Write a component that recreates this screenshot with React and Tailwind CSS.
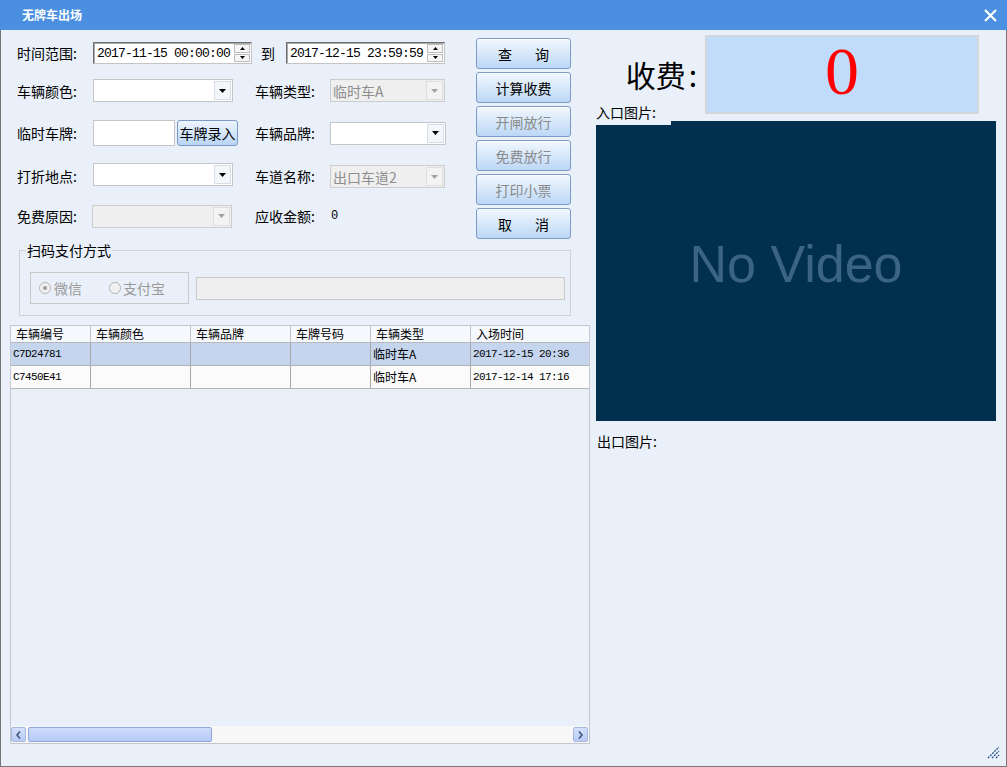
import React from 'react'

const mono = "font-['Liberation_Mono','Noto_Sans_CJK_SC',monospace]"

function DownArrow({ gray }) {
  return (
    <svg width="7" height="4" viewBox="0 0 7 4">
      <polygon points="0,0 7,0 3.5,4" fill={gray ? '#a3a3a3' : '#000'} />
    </svg>
  )
}

function Combo({ w, value, disabled, extra = '' }) {
  return (
    <div className={`${w} h-[23px] flex items-stretch border ${disabled ? 'border-[#cdcdcd] bg-[#efefef]' : 'border-[#c6c6c6] bg-white'} ${extra}`}>
      <div className={`flex-1 flex items-center pl-[2px] text-[14px] leading-none ${disabled ? 'text-[#8d8d8d]' : 'text-black'}`}>{value}</div>
      <div className={`w-[17px] m-[1px] flex items-center justify-center border ${disabled ? 'border-[#dedede] bg-[#f3f3f3]' : 'border-[#d6dde6] bg-[#f4f7fa]'}`}>
        <DownArrow gray={disabled} />
      </div>
    </div>
  )
}

function DateBox({ value }) {
  return (
    <div className="w-[159px] h-[22px] flex items-stretch border border-[#c4c4c4] border-t-[#6f6f6f] border-l-[#6f6f6f] bg-white shadow-[inset_1px_1px_0_#a9a9a9]">
      <div className={`flex-1 flex items-center pl-[3px] text-[13px] tracking-[-0.8px] leading-none ${mono}`}>{value}</div>
      <div className="w-[17px] flex flex-col gap-[1px] py-[1px] pr-[1px]">
        <div className="flex-1 flex items-center justify-center border border-[#bdbdbd] bg-[#f6f6f6]">
          <svg width="5" height="3" viewBox="0 0 5 3"><polygon points="0,3 5,3 2.5,0" fill="#000" /></svg>
        </div>
        <div className="flex-1 flex items-center justify-center border border-[#bdbdbd] bg-[#f6f6f6]">
          <svg width="5" height="3" viewBox="0 0 5 3"><polygon points="0,0 5,0 2.5,3" fill="#000" /></svg>
        </div>
      </div>
    </div>
  )
}

function Btn({ children, disabled }) {
  return (
    <div className={`h-[31px] rounded-[3px] border border-[#7b9bc6] bg-linear-to-b from-[#f2f7fd] via-[#d7e8fa] to-[#bcd7f6] shadow-[inset_0_1px_0_#ffffff] flex items-center justify-center text-[14px] leading-none ${disabled ? 'text-[#8a8a8a]' : 'text-black'}`}>
      {children}
    </div>
  )
}

function Label({ children, w = 'w-[76px]' }) {
  return <div className={`${w} text-[14px] leading-none`}>{children}</div>
}

function ScrollArrow({ left }) {
  return (
    <div className="w-[15px] h-[15px] rounded-[2px] border border-[#a6b9e1] bg-linear-to-b from-[#d3dffb] to-[#b9cbf6] flex items-center justify-center">
      <svg width="5" height="8" viewBox="0 0 5 8">
        <polyline points={left ? '4,0.5 1,4 4,7.5' : '1,0.5 4,4 1,7.5'} fill="none" stroke="#3b5283" strokeWidth="1.6" />
      </svg>
    </div>
  )
}

const cols = [
  { name: '车辆编号', w: 'w-[80px]' },
  { name: '车辆颜色', w: 'w-[100px]' },
  { name: '车辆品牌', w: 'w-[100px]' },
  { name: '车牌号码', w: 'w-[80px]' },
  { name: '车辆类型', w: 'w-[100px]' },
  { name: '入场时间', w: 'flex-1' },
]

const rows = [
  ['C7D24781', '', '', '', '临时车A', '2017-12-15 20:36'],
  ['C7450E41', '', '', '', '临时车A', '2017-12-14 17:16'],
]

export default function App() {
  return (
    <div className="w-[1007px] h-[767px] flex flex-col bg-[#e9f0f9] text-black font-['Noto_Sans_CJK_SC','Liberation_Sans',sans-serif]">
      {/* title bar */}
      <div className="h-[30px] bg-[#4a8fe0] flex items-center justify-between pl-[22px] pr-[10px]">
        <span className="text-white text-[12px] font-bold leading-none">无牌车出场</span>
        <svg width="13" height="13" viewBox="0 0 13 13">
          <path d="M1 1L12 12M12 1L1 12" stroke="#fff" strokeWidth="2.2" />
        </svg>
      </div>

      <div className="flex-1 flex border-x border-b border-[#777]">
        {/* left side */}
        <div className="w-[589px] flex flex-col">
          <div className="flex items-start pt-[8px]">
            <div className="ml-[16px] w-[429px] mt-[4px] flex flex-col">
              <div className="h-[22px] flex items-center">
                <Label>时间范围:</Label>
                <DateBox value="2017-11-15 00:00:00" />
                <div className="w-[34px] pl-[9px] text-[14px] leading-none">到</div>
                <DateBox value="2017-12-15 23:59:59" />
              </div>
              <div className="mt-[15px] h-[23px] flex items-center">
                <Label>车辆颜色:</Label>
                <Combo w="w-[140px]" value="" />
                <div className="ml-[22px]"><Label w="w-[75px]">车辆类型:</Label></div>
                <Combo w="w-[115px]" value="临时车A" disabled />
              </div>
              <div className="mt-[18px] h-[26px] flex items-center">
                <Label>临时车牌:</Label>
                <div className="w-[82px] h-[26px] border border-[#c6c6c6] bg-white" />
                <div className="ml-[2px] w-[61px] h-[26px] rounded-[3px] border border-[#7b9bc6] bg-linear-to-b from-[#eef5fd] via-[#d4e6fa] to-[#b9d5f5] flex items-center justify-center text-[14px] leading-none">车牌录入</div>
                <div className="ml-[17px]"><Label w="w-[75px]">车辆品牌:</Label></div>
                <Combo w="w-[116px]" value="" />
              </div>
              <div className="mt-[17px] h-[25px] flex items-center">
                <Label>打折地点:</Label>
                <Combo w="w-[140px]" value="" extra="self-start" />
                <div className="ml-[22px]"><Label w="w-[75px]">车道名称:</Label></div>
                <Combo w="w-[115px]" value="出口车道2" disabled extra="self-end" />
              </div>
              <div className="mt-[16px] h-[24px] flex items-center">
                <Label w="w-[75px]">免费原因:</Label>
                <Combo w="w-[140px]" value="" disabled />
                <div className="ml-[23px]"><Label w="w-[75px]">应收金额:</Label></div>
                <span className={`pl-[1px] text-[12px] leading-none ${mono}`}>0</span>
              </div>
            </div>

            <div className="ml-[30px] w-[95px] flex flex-col gap-[3px]">
              <Btn><span>查</span><span className="ml-[23px]">询</span></Btn>
              <Btn>计算收费</Btn>
              <Btn disabled>开闸放行</Btn>
              <Btn disabled>免费放行</Btn>
              <Btn disabled>打印小票</Btn>
              <Btn><span>取</span><span className="ml-[23px]">消</span></Btn>
            </div>
          </div>

          <fieldset className="mt-[3px] ml-[18px] w-[552px] border border-[#cdd2d8] pb-[11px] pl-[10px] pr-[5px]">
            <legend className="ml-[-4px] px-[1px] text-[14px] leading-[16px]">扫码支付方式</legend>
            <div className="mt-[14px] flex items-center gap-[7px]">
              <div className="w-[159px] h-[32px] border border-[#c9c9c9] flex items-center pl-[8px] text-[14px] leading-none text-[#9a9a9a]">
                <span className="w-[12px] h-[12px] rounded-full border border-[#b6b6b6] bg-[#f1f1f1] flex items-center justify-center">
                  <span className="w-[4px] h-[4px] rounded-full bg-[#9d9d9d]" />
                </span>
                <span className="ml-[3px]">微信</span>
                <span className="ml-[27px] w-[12px] h-[12px] rounded-full border border-[#b6b6b6] bg-[#f1f1f1]" />
                <span className="ml-[2px]">支付宝</span>
              </div>
              <div className="flex-1 h-[23px] border border-[#c9c9c9] bg-[#efefef]" />
            </div>
          </fieldset>

          {/* grid */}
          <div className="mt-[9px] ml-[9px] w-[580px] h-[419px] border border-[#c4c8ce] flex flex-col bg-[#e9f0f9]">
            <div className="h-[17px] flex border-b border-[#b9b9b9] bg-[#f5f8fc]">
              {cols.map((c, i) => (
                <div key={c.name} className={`${c.w} pl-[5px] text-[12px] leading-[16px] ${i < 5 ? 'border-r border-[#c2c2c2]' : ''}`}>{c.name}</div>
              ))}
            </div>
            {rows.map((r, ri) => (
              <div key={r[0]} className={`h-[23px] flex border-b border-[#b4b4b4] ${ri === 0 ? 'bg-[#c5d5ee]' : 'bg-[#fbfbfb]'}`}>
                {r.map((v, i) => (
                  <div key={i} className={`${cols[i].w} flex items-center pl-[2px] leading-none ${i === 4 ? 'text-[12px]' : `text-[11px] tracking-[-0.6px] ${mono}`} ${i < 5 ? 'border-r border-[#a8a8a8]' : ''}`}>{v}</div>
                ))}
              </div>
            ))}
            <div className="flex-1" />
            <div className="h-[17px] bg-[#f7f7f7] flex items-center gap-[2px] pr-[1px]">
              <ScrollArrow left />
              <div className="w-[184px] h-[15px] rounded-[2px] border border-[#8fa8da] bg-linear-to-b from-[#cfdcfb] to-[#b6caf7]" />
              <div className="flex-1" />
              <ScrollArrow />
            </div>
          </div>
        </div>

        {/* right side */}
        <div className="flex-1 flex flex-col pl-[6px] pr-[6px] pt-[5px]">
          <div className="flex h-[86px]">
            <div className="w-[109px] flex flex-col">
              <div className="mt-[20px] pr-[8px] text-right text-[30px] leading-[38px]">收费<span className="ml-[3px]">:</span></div>
              <div className="mt-auto h-[17px] text-[14px] leading-[17px]">入口图片:</div>
            </div>
            <div className="w-[274px] h-[79px] border-2 border-[#d3d7dc] bg-[#c1dcfb] flex items-center justify-center pb-[7px]">
              <span className="font-['Liberation_Serif',serif] text-[68px] leading-none text-[#ff0000]">0</span>
            </div>
          </div>
          <div className="w-[400px] h-[300px] bg-[#00304e] flex flex-col">
            <div className="w-[75px] h-[4px] bg-[#e9f0f9]" />
            <div className="flex-1 flex items-center justify-center pb-[19px] font-['Liberation_Sans',sans-serif] text-[52px] leading-none text-[#3b6482]">No Video</div>
          </div>
          <div className="mt-[12px] pl-[1px] text-[14px] leading-[17px]">出口图片:</div>
          <div className="mt-auto self-end mb-[7px]">
            <svg width="13" height="13" viewBox="0 0 13 13">
              <path d="M1 12L12 1M5 12L12 5M9 12L12 9" stroke="#1f4e80" strokeWidth="1.3" strokeDasharray="2 1" />
            </svg>
          </div>
        </div>
      </div>
    </div>
  )
}
